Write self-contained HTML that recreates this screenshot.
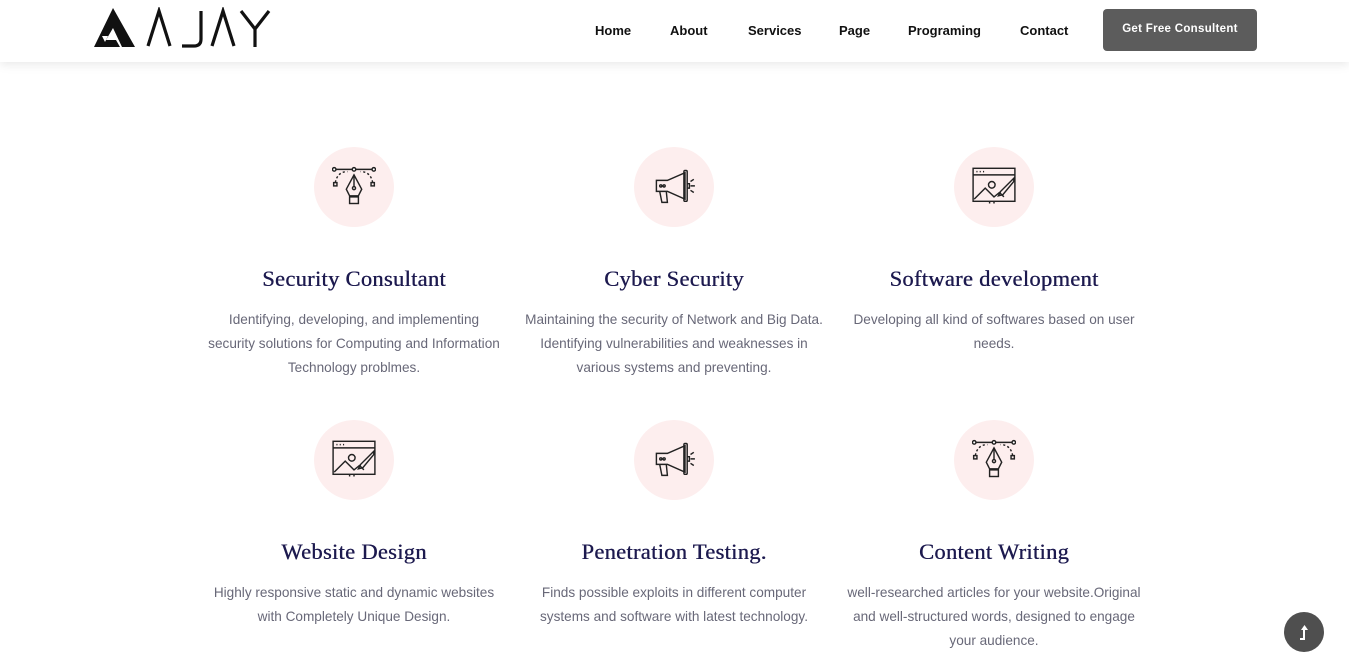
<!DOCTYPE html>
<html><head><meta charset="utf-8"><style>
*{margin:0;padding:0;box-sizing:border-box}
body{width:1349px;height:657px;overflow:hidden;background:#fff;font-family:"Liberation Sans",sans-serif;position:relative}
header{position:absolute;left:0;top:0;width:1349px;height:62px;background:#fff;box-shadow:0 2px 10px rgba(0,0,0,.1);z-index:2}
.logo{position:absolute;left:94px;top:7px}
nav a{position:absolute;top:23px;font-size:13px;font-weight:bold;color:#111;text-decoration:none}
.btn{position:absolute;left:1103px;top:9px;width:154px;height:42px;background:#5c5c5c;border-radius:4px;color:#fff;font-size:11.5px;font-weight:bold;text-align:center;line-height:40px;letter-spacing:.3px}
.card{position:absolute;width:320px;text-align:center}
.circ{width:80px;height:80px;border-radius:50%;background:#fdeeee;margin:0 auto;display:flex;align-items:center;justify-content:center}
h3{font-family:"Liberation Serif",serif;font-weight:normal;font-size:22.5px;color:#1d1a4f;margin-top:37px;height:30px;line-height:30px;letter-spacing:.3px;text-shadow:0.4px 0 0 #1d1a4f}
p{font-size:13.6px;color:#686878;line-height:24px;margin-top:14px;padding:0 4px}
.top{position:absolute;left:1284px;top:612px;width:40px;height:40px;border-radius:50%;background:#4f4f4f}
</style></head><body>
<header>
<svg class="logo" width="178" height="42" viewBox="0 0 178 42">
<polygon points="0,40 19,1 41,40 28,40 19,21 12,33 22,33 26,40" fill="#111"/>
<polygon points="8,29 14,29 11,35" fill="#fff"/>
<path d="M54 39 L65 4 L76 39" stroke="#111" stroke-width="3.2" fill="none"/>
<path d="M107 4 V32 Q107 39 100 39 H88" stroke="#111" stroke-width="3.2" fill="none"/>
<path d="M118 39 L129 4 L140 39" stroke="#111" stroke-width="3.2" fill="none"/>
<path d="M147 4 L161 22 L175 4 M161 22 V40" stroke="#111" stroke-width="3.2" fill="none"/>
</svg>
<nav>
<a style="left:595px">Home</a><a style="left:670px">About</a><a style="left:748px">Services</a><a style="left:839px">Page</a><a style="left:908px">Programing</a><a style="left:1020px">Contact</a>
</nav>
<div class="btn">Get Free Consultent</div>
</header>

<svg width="0" height="0" style="position:absolute">
<defs>
<g id="pen" fill="none" stroke="#222" stroke-width="1.3">
<line x1="2" y1="4" x2="38" y2="4"/><circle cx="2" cy="4" r="1.6" fill="#fff"/><circle cx="20" cy="4" r="1.6" fill="#fff"/><circle cx="38" cy="4" r="1.6" fill="#fff"/>
<path d="M3 16 Q5 6 14 6 M37 16 Q35 6 26 6" stroke-dasharray="2 2"/>
<rect x="1.5" y="16" width="3" height="3"/><rect x="35.5" y="16" width="3" height="3"/>
<path d="M20 9 L27 22 L24 28 H16 L13 22 Z"/><line x1="20" y1="9" x2="20" y2="20"/><circle cx="20" cy="21" r="1.4"/>
<rect x="16" y="29" width="8" height="6"/>
</g>
<g id="mega" fill="none" stroke="#222" stroke-width="1.3">
<path d="M4 14 H14 L30 7 V31 L14 24 H4 Z"/><rect x="29" y="5" width="3" height="28" rx="1"/>
<path d="M7 24 L9 34 H14 L13 24"/><circle cx="8" cy="19" r="1"/><circle cx="11" cy="19" r="1"/>
<path d="M35 15 L38 13 M35 19 H39 M35 23 L38 25 M32 17 H34 V21 H32"/>
</g>
<g id="img" fill="none" stroke="#222" stroke-width="1.3">
<rect x="1" y="3" width="38" height="30"/><line x1="1" y1="9" x2="39" y2="9"/>
<path d="M4 6 h1 M7 6 h1 M10 6 h1"/>
<path d="M2 31 L12 21 L20 29 L25 25 L29 29"/><circle cx="18" cy="18" r="3"/>
<path d="M38 12 L26 24 L24 28 L28 27 L38 15 Z"/><path d="M16 33 v2 M20 33 v2"/>
</g>
</defs></svg>

<div class="card" style="left:194px;top:147px"><div class="circ"><svg width="44" height="44" viewBox="0 0 40 40"><use href="#pen"/></svg></div><h3>Security Consultant</h3><p style="padding:0 10px">Identifying, developing, and implementing security solutions for Computing and Information Technology problmes.</p></div>
<div class="card" style="left:514px;top:147px"><div class="circ"><svg width="44" height="44" viewBox="0 0 40 40"><use href="#mega"/></svg></div><h3>Cyber Security</h3><p>Maintaining the security of Network and Big Data. Identifying vulnerabilities and weaknesses in various systems and preventing.</p></div>
<div class="card" style="left:834px;top:147px"><div class="circ"><svg width="44" height="44" viewBox="0 0 40 40"><use href="#img"/></svg></div><h3>Software development</h3><p style="padding:0 16px">Developing all kind of softwares based on user needs.</p></div>
<div class="card" style="left:194px;top:420px"><div class="circ"><svg width="44" height="44" viewBox="0 0 40 40"><use href="#img"/></svg></div><h3>Website Design</h3><p style="padding:0 14px">Highly responsive static and dynamic websites with Completely Unique Design.</p></div>
<div class="card" style="left:514px;top:420px"><div class="circ"><svg width="44" height="44" viewBox="0 0 40 40"><use href="#mega"/></svg></div><h3>Penetration Testing.</h3><p style="padding:0 18px">Finds possible exploits in different computer systems and software with latest technology.</p></div>
<div class="card" style="left:834px;top:420px"><div class="circ"><svg width="44" height="44" viewBox="0 0 40 40"><use href="#pen"/></svg></div><h3>Content Writing</h3><p>well-researched articles for your website.Original and well-structured words, designed to engage your audience.</p></div>

<div class="top"><svg width="40" height="40"><path d="M16 28 H21 V18 H24 L20.5 13 L17 18 H19 V26 H16 Z" fill="#fff"/></svg></div>
</body></html>
